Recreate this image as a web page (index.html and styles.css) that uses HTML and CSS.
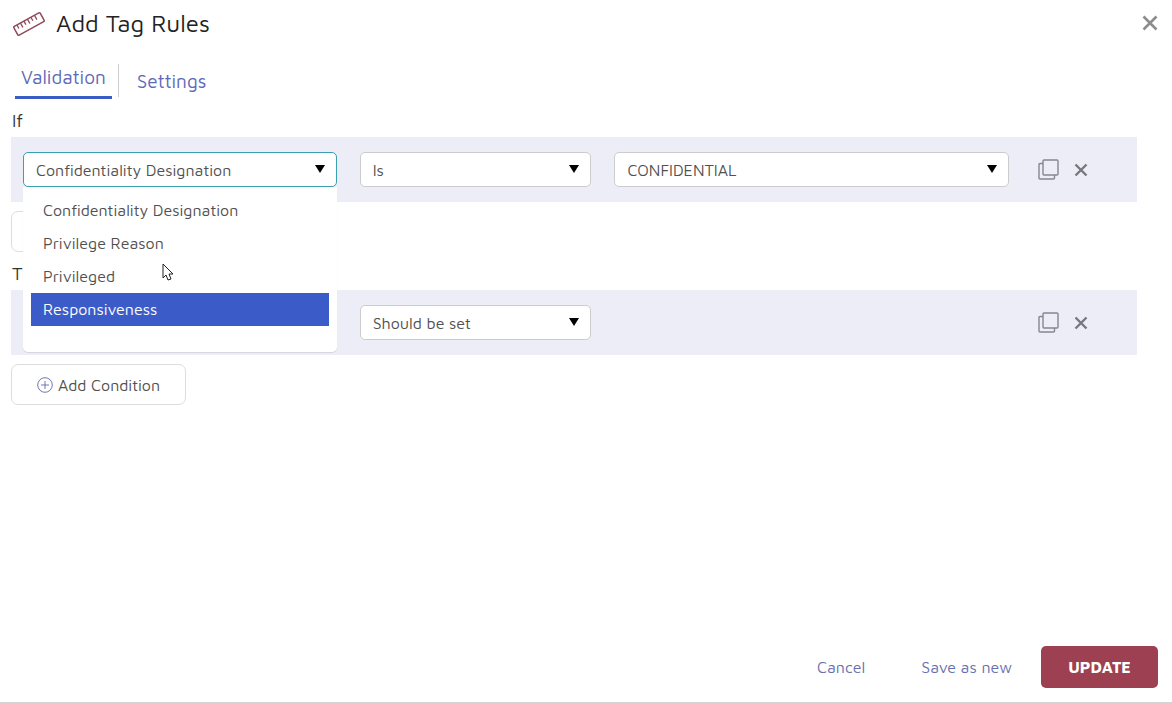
FILE: index.html
```html
<!DOCTYPE html>
<html lang="en">
<head>
    <meta charset="UTF-8">
    <meta name="viewport" content="width=device-width, initial-scale=1.0">
    <title>Add Tag Rules</title>
    <link rel="stylesheet" href="styles.css">
</head>
<body>
    <div class="dialog">
        <header>
            <svg class="ruler" width="32" height="26" viewBox="0 0 32 26" fill="none" stroke="#8f4a58">
                <g transform="rotate(-29 16 13)">
                    <rect x="1" y="8" width="30" height="10" rx="1" stroke-width="1.5"/>
                    <path d="M5 8v4M9 8v5M13 8v4M17 8v5M21 8v4M25 8v5" stroke-width="1.3"/>
                </g>
            </svg>
            <h1>Add Tag Rules</h1>
            <button type="button" class="icon-btn close" aria-label="Close">
                <svg width="16" height="16" viewBox="0 0 16 16" fill="none" stroke="#8c8c8c" stroke-width="2.600"><path d="M1.500 1.500l13 13M14.500 1.500l-13 13"/></svg>
            </button>
        </header>

        <nav class="tabs">
            <a href="#validation" class="tab active">Validation</a>
            <a href="#settings" class="tab">Settings</a>
        </nav>

        <main id="validation">
            <section>
                <h2>If</h2>
                <div class="rule">
                    <div class="field">
                        <select class="focused" aria-label="Tag group">
                            <option>Confidentiality Designation</option>
                            <option>Privilege Reason</option>
                            <option>Privileged</option>
                            <option>Responsiveness</option>
                        </select>
                        <div class="dropdown">
                            <ul role="listbox" aria-label="Tag group">
                                <li role="option">Confidentiality Designation</li>
                                <li role="option">Privilege Reason</li>
                                <li role="option">Privileged</li>
                                <li role="option" class="highlight" aria-selected="true">Responsiveness</li>
                            </ul>
                            <svg class="cursor" width="12" height="19" viewBox="0 0 12 19" fill="#fff" stroke="#222"><path d="M1 1v14l3-3 2 5 3-1-2-5h4z"/></svg>
                        </div>
                    </div>
                    <div class="field">
                        <select aria-label="Operator">
                            <option>Is</option>
                            <option>Is not</option>
                        </select>
                    </div>
                    <div class="field">
                        <select aria-label="Value">
                            <option>CONFIDENTIAL</option>
                        </select>
                    </div>
                    <div class="actions">
                        <button type="button" class="icon-btn" aria-label="Copy">
                            <svg width="21" height="21" viewBox="0 0 21 21" fill="none" stroke="#85868f" stroke-width="1.4"><rect x="5" y="1" width="15" height="15" rx="1"/><path d="M5 4.500H2q-1 0-1 1V19q0 1 1 1h13.500q1 0 1-1v-3"/></svg>
                        </button>
                        <button type="button" class="icon-btn" aria-label="Remove">
                            <svg width="14" height="14" viewBox="0 0 14 14" fill="none" stroke="#77787f" stroke-width="2.400"><path d="M1.500 1.500l11 11M12.500 1.500l-11 11"/></svg>
                        </button>
                    </div>
                </div>
                <button type="button" class="add">
                    <svg width="16" height="16" viewBox="0 0 16 16" fill="none" stroke="#7076b4"><circle cx="8" cy="8" r="7.300"/><path d="M8 4v8M4 8h8"/></svg>
                    Add Condition
                </button>
            </section>

            <section>
                <h2>Then</h2>
                <div class="rule">
                    <div class="field">
                        <select aria-label="Tag group">
                            <option>Responsiveness</option>
                        </select>
                    </div>
                    <div class="field">
                        <select aria-label="Action">
                            <option>Should be set</option>
                            <option>Should not be set</option>
                        </select>
                    </div>
                    <div class="field"></div>
                    <div class="actions">
                        <button type="button" class="icon-btn" aria-label="Copy">
                            <svg width="21" height="21" viewBox="0 0 21 21" fill="none" stroke="#85868f" stroke-width="1.4"><rect x="5" y="1" width="15" height="15" rx="1"/><path d="M5 4.500H2q-1 0-1 1V19q0 1 1 1h13.500q1 0 1-1v-3"/></svg>
                        </button>
                        <button type="button" class="icon-btn" aria-label="Remove">
                            <svg width="14" height="14" viewBox="0 0 14 14" fill="none" stroke="#77787f" stroke-width="2.400"><path d="M1.500 1.500l11 11M12.500 1.500l-11 11"/></svg>
                        </button>
                    </div>
                </div>
                <button type="button" class="add">
                    <svg width="16" height="16" viewBox="0 0 16 16" fill="none" stroke="#7076b4"><circle cx="8" cy="8" r="7.300"/><path d="M8 4v8M4 8h8"/></svg>
                    Add Condition
                </button>
            </section>
        </main>

        <footer>
            <button type="button" class="btn-link">Cancel</button>
            <button type="button" class="btn-link">Save as new</button>
            <button type="submit" class="btn-update">UPDATE</button>
        </footer>
    </div>
</body>
</html>
```
FILE: styles.css
```css
* {
    box-sizing: border-box;
}

body {
    margin: 0;
    font-family: "Maven Pro", "Noto Sans", sans-serif;
    font-size: 16px;
    color: #505050;
    background: #fff;
}

button, select {
    font: inherit;
    color: inherit;
}

.dialog {
    display: flex;
    flex-direction: column;
    min-height: 100vh;
    border-bottom: 1px solid #d4d4d4;
}

header {
    display: flex;
    align-items: center;
    height: 45px;
    padding: 2px 14px 0 13px;
}

h1 {
    flex: 1;
    margin: 0 0 0 11px;
    line-height: 32px;
    padding-bottom: 2px;
    font-size: 24px;
    font-weight: 400;
    color: #222;
}

.icon-btn {
    display: flex;
    padding: 0;
    border: none;
    background: none;
    cursor: pointer;
}

.close {
    padding-bottom: 2px;
}

.tabs {
    display: flex;
    align-items: flex-start;
    padding: 19px 15px 0;
}

.tab {
    padding: 4px 6px 0;
    line-height: 26px;
    font-size: 19px;
    color: #5c68b8;
    text-decoration: none;
}

.tab.active {
    height: 35px;
    padding-top: 0;
    border-bottom: 3px solid #3b5cc4;
}

.tab + .tab {
    height: 33px;
    margin-left: 6px;
    padding-left: 18px;
    border-left: 1px solid #ccc;
}

main {
    flex: 1;
    padding: 10px 35px 0 11px;
}

section {
    margin-bottom: 10px;
}

h2 {
    margin: 0;
    padding: 0 1px 4px;
    line-height: 24px;
    font-size: 18px;
    font-weight: 400;
    color: #333;
}

.rule {
    display: grid;
    grid-template-columns: 314fr 232fr 395fr 80px;
    gap: 23px;
    align-items: center;
    height: 65px;
    padding: 0 25px 0 12px;
    background: #ededf7;
}

.field {
    position: relative;
}

select {
    display: block;
    width: 100%;
    height: 35px;
    padding: 0 32px 0 12px;
    border: 1px solid #ccc;
    border-radius: 5px;
    appearance: none;
    background: #fff;
}

select.focused {
    border-color: #3a9fae;
}

/* triangle on the right of each select */
.field:has(select)::after {
    content: "";
    position: absolute;
    top: 13px;
    right: 12px;
    border: 5px solid transparent;
    border-top: 8px solid #000;
    border-bottom: none;
    pointer-events: none;
}

.dropdown {
    position: absolute;
    top: 100%;
    left: 0;
    right: 0;
    z-index: 10;
    padding: 7px 8px 26px;
    background: #fff;
    border-radius: 0 0 5px 5px;
    box-shadow: 0 1px 1px rgba(0,0,0,0.1);
}

.dropdown ul {
    list-style: none;
    margin: 0;
    padding: 0;
}

.dropdown li {
    padding: 0 12px;
    line-height: 33px;
}

.dropdown .highlight {
    background: #3b5cc8;
    color: #fff;
}

.cursor {
    position: absolute;
    top: 76px;
    left: 139px;
}

.actions {
    display: flex;
    align-items: center;
    gap: 15px;
    padding-left: 6px;
}

.add {
    display: flex;
    align-items: center;
    justify-content: center;
    gap: 5px;
    width: 175px;
    height: 41px;
    margin-top: 9px;
    padding: 0;
    border: 1px solid #ddd;
    border-radius: 7px;
    background: #fff;
}

footer {
    display: flex;
    align-items: center;
    justify-content: flex-end;
    padding: 0 14px 14px;
}

.btn-link {
    margin-right: 29px;
    padding: 0;
    border: none;
    background: none;
    color: #666fb0;
}

.btn-link:first-child {
    margin-right: 56px;
}

.btn-update {
    width: 117px;
    height: 42px;
    border: none;
    border-radius: 5px;
    background: #9c4052;
    color: #fff;
    font-weight: 700;
}
```
